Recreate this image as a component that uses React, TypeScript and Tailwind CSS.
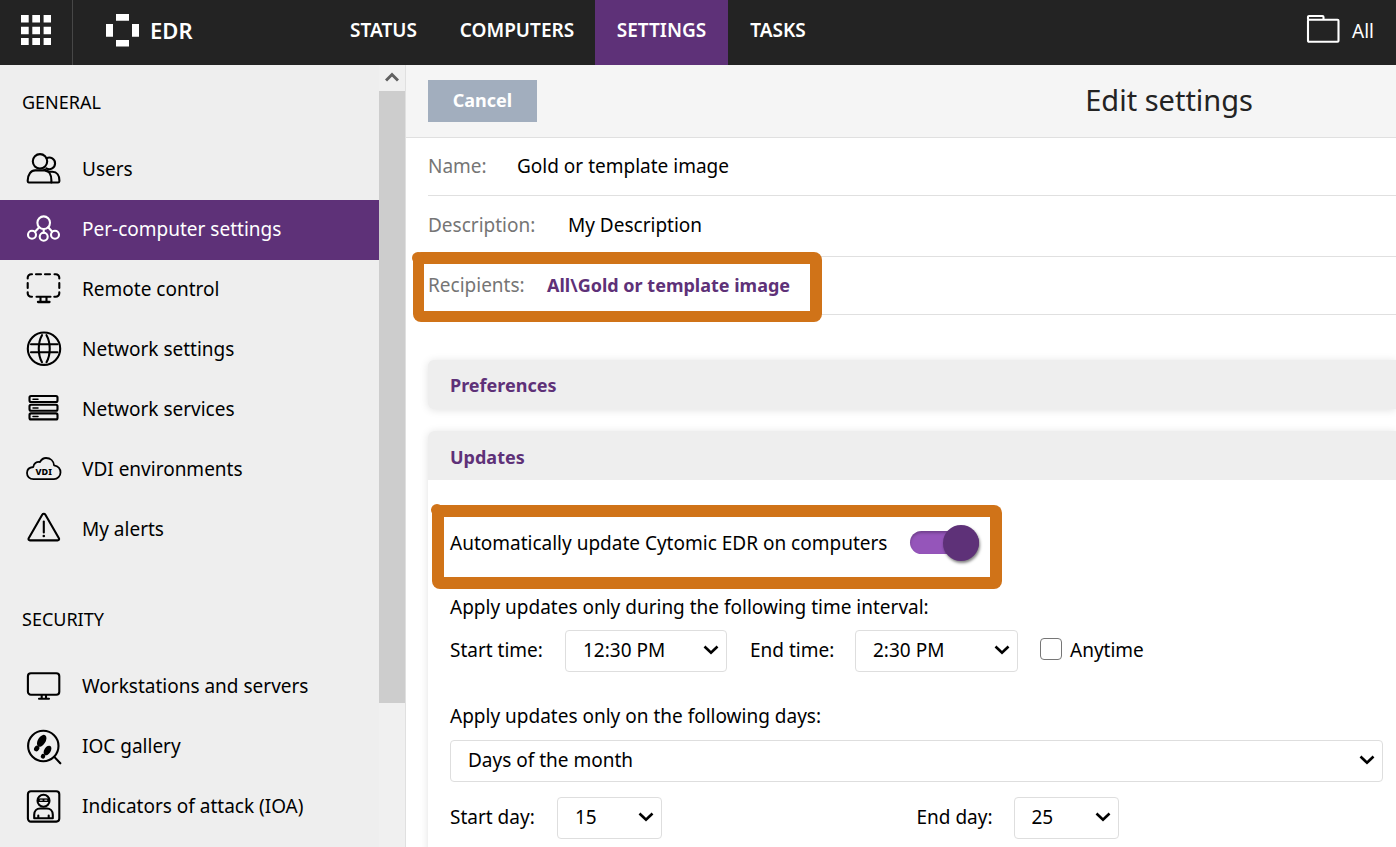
import React, { useState } from "react";

type IconProps = { children: React.ReactNode };

function Icon({ children }: IconProps) {
  return (
    <svg
      viewBox="0 0 36 40"
      className="h-10 w-9 shrink-0"
      fill="none"
      stroke="currentColor"
      strokeWidth="2.1"
      strokeLinecap="round"
      strokeLinejoin="round"
      aria-hidden="true"
    >
      {children}
    </svg>
  );
}

const UsersIcon = () => (
  <Icon>
    <circle cx="14" cy="11.3" r="7.2" />
    <path d="M20.6 8.2A5.8 5.8 0 1 1 20.4 18.4" />
    <path d="M3 32.5c-1 0-1.3-.6-1.3-2C1.9 24.5 5 20.4 9.2 20.4h9.3c4.5 0 6.9 4.4 6.9 10.1v2z" />
    <path d="M18.5 19.5q2 2.3 5.5 2.3h2.5c4.500 0 6.900 3.700 6.900 8.700 0 1.500-.3 2-1.400 2h-6.600" />
  </Icon>
);

const NodesIcon = () => (
  <Icon>
    <circle cx="17.7" cy="12.7" r="6.3" />
    <circle cx="6" cy="24.7" r="4" />
    <circle cx="17.7" cy="26.7" r="4" />
    <circle cx="29" cy="24.7" r="4" />
    <path d="M13.2 17.3 9 21.7M17.7 19v3.7M22.2 17.3l4 4.4" />
  </Icon>
);

const RemoteIcon = () => (
  <Icon>
    <path d="M1.7 8.5V7.8a3.5 3.5 0 0 1 3.5-3.5h.8M10 4.3h5M19 4.3h5M28.5 4.3h1.3a3.5 3.5 0 0 1 3.5 3.5v.7M33.3 13v5M33.3 22.3v.9a3.5 3.5 0 0 1-3.5 3.5h-1.5M24.5 26.7h-14M6 26.7h-.8a3.5 3.5 0 0 1-3.5-3.500v-.9M1.700 13v5" />
    <path d="M14.5 27v4.5M20.5 27v4.5" />
    <path d="M12 32h11.5" strokeWidth="2.3" />
  </Icon>
);

const GlobeIcon = () => (
  <Icon>
    <circle cx="18" cy="18.7" r="16.2" />
    <path d="M5 14.3h26.5M5 22.3h26.5M16 5.2c-4.3 7.5-4.3 19.5 0 27M20.5 5.2c4.3 7.5 4.3 19.5 0 27" />
  </Icon>
);

const ServicesIcon = () => (
  <Icon>
    <rect x="3.5" y="6" width="28" height="6" rx="1.5" />
    <rect x="3.5" y="14.7" width="28" height="6" rx="1.5" />
    <rect x="3.5" y="23.4" width="28" height="6" rx="1.5" />
    <path d="M7 9.2h5M7 17.9h5M7 26.6h5" strokeWidth="1.5" />
  </Icon>
);

const VdiIcon = () => (
  <Icon>
    <path
      strokeWidth="1.8"
      d="M7.5 29.2C3.5 29.2 1 26.5 1 23c0-3 2.2-5.6 6.300-6 .2-3.500 3.200-5.500 6.700-5C15.500 9.200 17.500 8 20 8c4.500 0 7.700 3 8 7.300 4 .7 6.500 3.700 6.500 7.200 0 3.500-3 6.700-6.500 6.700Z"
    />
    <text
      x="17.7"
      y="25"
      textAnchor="middle"
      fill="currentColor"
      stroke="none"
      fontSize="9"
      fontWeight="800"
    >
      VDI
    </text>
  </Icon>
);

const AlertIcon = () => (
  <Icon>
    <path d="M16.2 4.7a1.9 1.9 0 0 1 3.2 0l13.5 23.5c.6 1.200 0 2.200-1.300 2.200H4c-1.300 0-1.900-1-1.300-2.200Z" />
    <path d="M17.8 11.5v11" />
    <circle cx="17.8" cy="26" r="1.3" fill="currentColor" stroke="none" />
  </Icon>
);

const MonitorIcon = () => (
  <Icon>
    <rect x="1.9" y="6.3" width="31.4" height="21.4" rx="3" />
    <path d="M15.7 28v3.5M20 28v3.5M13 31.8h10" />
  </Icon>
);

const FootprintIcon = () => (
  <Icon>
    <circle cx="17.3" cy="19" r="15.2" />
    <path d="m28.3 29.900 6 6.400" />
    <g fill="currentColor" stroke="none">
      <ellipse cx="15.7" cy="13.8" rx="3.8" ry="6.6" transform="rotate(32 15.7 13.8)" />
      <ellipse cx="10.7" cy="21.5" rx="2.5" ry="3" transform="rotate(32 10.7 21.5)" />
      <ellipse cx="21.5" cy="23.5" rx="3.2" ry="5.3" transform="rotate(32 21.5 23.5)" />
      <ellipse cx="17" cy="29.3" rx="2.2" ry="2.4" transform="rotate(32 17 29.3)" />
    </g>
  </Icon>
);

const AttackerIcon = () => (
  <Icon>
    <rect x="1.9" y="4.2" width="31.4" height="30.4" rx="3" />
    <circle cx="17.5" cy="13.7" r="6" />
    <path d="M11.8 11.4h11.400v3.600H11.800z" fill="currentColor" stroke="none" />
    <path d="M14.2 13.2h2M18.800 13.200h2" stroke="#eee" strokeWidth="1" />
    <path d="M8.2 31.3v-3.500c0-4 2.500-6.300 6-6.300h6.600c3.500 0 6 2.300 6 6.300v3.500zM12.300 28.500v2.500M22.700 28.500v2.500" />
  </Icon>
);

type MenuItem = { label: string; icon: () => React.JSX.Element; active?: boolean };

const general: MenuItem[] = [
  { label: "Users", icon: UsersIcon },
  { label: "Per-computer settings", icon: NodesIcon, active: true },
  { label: "Remote control", icon: RemoteIcon },
  { label: "Network settings", icon: GlobeIcon },
  { label: "Network services", icon: ServicesIcon },
  { label: "VDI environments", icon: VdiIcon },
  { label: "My alerts", icon: AlertIcon },
];

const security: MenuItem[] = [
  { label: "Workstations and servers", icon: MonitorIcon },
  { label: "IOC gallery", icon: FootprintIcon },
  { label: "Indicators of attack (IOA)", icon: AttackerIcon },
];

function Menu({ items }: { items: MenuItem[] }) {
  return (
    <ul>
      {items.map(({ label, icon: Glyph, active }) => (
        <li key={label}>
          <a
            href="#"
            aria-current={active ? "page" : undefined}
            className={
              active
                ? "flex h-15 items-center gap-5 bg-[#5e3178] pl-[26px] text-white"
                : "flex h-15 items-center gap-5 pl-[26px] text-black"
            }
          >
            <Glyph />
            <span className="pb-[2px]">{label}</span>
          </a>
        </li>
      ))}
    </ul>
  );
}

function Select({ id, value, className }: { id: string; value: string; className: string }) {
  return (
    <div className={`relative flex ${className}`}>
      <select
        id={id}
        defaultValue={value}
        className="h-[42px] w-full appearance-none rounded border border-[#dedede] bg-white pr-8 pb-[2px] pl-[17px] text-black"
      >
        <option>{value}</option>
      </select>
      <svg
        viewBox="0 0 16 10"
        className="pointer-events-none absolute top-[15px] right-2 h-[10px] w-4"
        fill="none"
        stroke="#000"
        strokeWidth="2.6"
        aria-hidden="true"
      >
        <path d="m1.5 1.5 6.500 6.300 6.500-6.300" />
      </svg>
    </div>
  );
}

const tabs = [
  { label: "STATUS", width: "w-[111px]" },
  { label: "COMPUTERS", width: "w-[156px]" },
  { label: "SETTINGS", width: "w-[133px]", active: true },
  { label: "TASKS", width: "w-[100px]" },
];

export default function App() {
  const [auto, setAuto] = useState(true);

  return (
    <div className="flex h-screen flex-col overflow-hidden bg-white font-['Noto_Sans',sans-serif] text-[19px] leading-6 text-black">
      <header className="flex h-[65px] shrink-0 bg-[#232323] pb-[5px] text-white">
        <button aria-label="Applications" className="-mb-[5px] flex w-[73px] items-center justify-center border-r border-[#474747] pb-[5px]">
          <svg viewBox="0 0 30 30" className="h-[30px] w-[30px]" fill="#fff" aria-hidden="true">
            <path d="M0 0h7.7v7.500H0zM11.300 0H19v7.500h-7.700zM22.600 0h7.700v7.500h-7.700zM0 11.800h7.700v7.400H0zM11.300 11.800H19v7.400h-7.700zM22.600 11.800h7.700v7.400h-7.700zM0 23h7.700v7.500H0zM11.300 23H19v7.500h-7.700zM22.600 23h7.700v7.500h-7.700z" />
          </svg>
        </button>
        <a href="#" className="flex w-[255px] items-center gap-[11px] pl-[33px] text-[22px] font-semibold">
          <svg viewBox="0 0 33 33" className="h-[33px] w-[33px]" fill="#fff" aria-hidden="true">
            <path d="M10 0h13v6.800H10zM10 26h13v6.600H10zM0 10h7v12.800H0zM26 10h7v12.800h-7z" />
          </svg>
          EDR
        </a>
        <nav className="-mb-[5px] flex">
          {tabs.map((t) => (
            <a
              key={t.label}
              href="#"
              className={`flex items-center justify-center pb-[5px] font-semibold ${t.width} ${t.active ? "bg-[#5e3178]" : ""}`}
            >
              {t.label}
            </a>
          ))}
        </nav>
        <button className="ml-auto flex items-center gap-3 pt-[2px] pr-[22px]">
          <svg viewBox="0 0 34 30" className="mb-1 h-[30px] w-[34px]" fill="none" stroke="#fff" strokeWidth="2.1" strokeLinejoin="round" aria-hidden="true">
            <path d="M2 5.700V3a1 1 0 0 1 1-1h13.500a1 1 0 0 1 1 1v2.700" />
            <rect x="2" y="5.7" width="30.5" height="22" rx="1" />
          </svg>
          All
        </button>
      </header>

      <div className="flex min-h-0 flex-1">
        <aside className="flex w-[406px] shrink-0 border-r border-[#e0e0e0] bg-[#eee]">
          <nav className="flex-1 overflow-hidden">
            <h2 className="h-[75px] pt-[25px] pl-[22px] text-[18px]">GENERAL</h2>
            <Menu items={general} />
            <h2 className="h-[97px] pt-[47px] pl-[22px] text-[18px]">SECURITY</h2>
            <Menu items={security} />
          </nav>
          <div className="flex w-[26px] flex-col bg-[#f0f0f0]">
            <div className="flex h-[26px] shrink-0 items-center justify-center">
              <svg viewBox="0 0 14 12" className="h-3 w-[14px]" fill="none" stroke="#606060" strokeWidth="3" aria-hidden="true">
                <path d="m1 8.500 6-6 6 6" />
              </svg>
            </div>
            <div className="min-h-0 flex-1">
              <div className="h-[81%] bg-[#cdcdcd]" />
            </div>
          </div>
        </aside>

        <main className="min-w-0 flex-1 overflow-hidden">
          <div className="flex h-[73px] items-center justify-between border-b border-[#e0e0e0] bg-[#f5f5f5] pr-[143px] pl-[22px]">
            <button className="h-[42px] w-[109px] bg-[#a2aebe] pb-[2px] text-[18px] font-bold text-white">Cancel</button>
            <h1 className="pb-[2px] text-[29px] text-[#232323]">Edit settings</h1>
          </div>

          <div className="pl-[22px]">
            <dl>
              <div className="flex h-[58px] items-center border-b border-[#e0e0e0] pb-[2px]">
                <dt className="w-[89px] text-[#757575]">Name:</dt>
                <dd>Gold or template image</dd>
              </div>
              <div className="flex h-[61px] items-center border-b border-[#e0e0e0] pb-[2px]">
                <dt className="w-[140px] text-[#757575]">Description:</dt>
                <dd>My Description</dd>
              </div>
              <div className="relative flex h-[58px] items-center border-b border-[#e0e0e0] pb-[2px]">
                <dt className="w-[119px] text-[#757575]">Recipients:</dt>
                <dd>
                  <a href="#" className="text-[18px] font-bold text-[#5e3178]">
                    All\Gold or template image
                  </a>
                </dd>
                <div className="pointer-events-none absolute -top-[5px] -left-[15px] h-[70px] w-[409px] rounded-lg bg-[#d07318] [clip-path:polygon(evenodd,0_0,100%_0,100%_100%,0_100%,0_0,11px_12px,397px_12px,397px_59px,11px_59px,11px_12px)]" />
                <div className="pointer-events-none absolute -top-[5px] -left-4 h-3 w-3 rounded-full bg-[#d07318]" />
              </div>
            </dl>

            <section className="mt-[45px] flex h-[49px] items-center rounded-l-md bg-[#eee] pl-[22px] shadow-[0_1px_8px_rgba(0,0,0,0.12)]">
              <h2 className="text-[18px] font-bold text-[#5e3178]">Preferences</h2>
            </section>

            <section className="mt-[22px] h-[500px] rounded-l-md shadow-[0_1px_8px_rgba(0,0,0,0.12)]">
              <div className="flex h-[49px] items-center rounded-tl-md bg-[#eee] pt-[2px] pl-[22px]">
                <h2 className="text-[18px] font-bold text-[#5e3178]">Updates</h2>
              </div>

              <div className="pt-[37px] pr-[13px] pl-[22px]">
                <div className="relative flex h-[60px] w-[529px] items-start justify-between">
                  <label htmlFor="auto" className="pt-[14px]">
                    Automatically update Cytomic EDR on computers
                  </label>
                  <button
                    id="auto"
                    role="switch"
                    aria-checked={auto}
                    onClick={() => setAuto(!auto)}
                    className={`mt-[14px] flex h-[23px] w-[69px] items-center rounded-full bg-[#9555ba] shadow-[inset_0_2px_3px_rgba(0,0,0,0.25)] ${auto ? "justify-end" : "justify-start"}`}
                  >
                    <span className="h-9 w-9 shrink-0 rounded-full bg-[#5e3178] shadow-[1px_2px_3px_rgba(0,0,0,0.5)]" />
                  </button>
                  <div className="pointer-events-none absolute -top-3 -left-[18px] h-[84px] w-[570px] rounded-lg bg-[#d07318] [clip-path:polygon(evenodd,0_0,100%_0,100%_100%,0_100%,0_0,12px_12px,558px_12px,558px_72px,12px_72px,12px_12px)]" />
                  <div className="pointer-events-none absolute -top-[13px] -left-[19px] h-3 w-3 rounded-full bg-[#d07318]" />
                </div>

                <p className="mt-[18px]">Apply updates only during the following time interval:</p>
                <div className="mt-[11px] flex items-center">
                  <label htmlFor="start-time" className="w-[115px] pb-[2px]">Start time:</label>
                  <Select id="start-time" value="12:30 PM" className="w-[162px]" />
                  <label htmlFor="end-time" className="ml-[23px] w-[105px] pb-[2px]">End time:</label>
                  <Select id="end-time" value="2:30 PM" className="w-[163px]" />
                  <input
                    id="anytime"
                    type="checkbox"
                    className="mr-2 mb-1 ml-[22px] h-[22px] w-[22px] appearance-none rounded border border-[#767676] bg-white checked:bg-[#5e3178]"
                  />
                  <label htmlFor="anytime" className="pb-[2px]">Anytime</label>
                </div>

                <label htmlFor="days" className="mt-8 block">Apply updates only on the following days:</label>
                <Select id="days" value="Days of the month" className="mt-3 w-full" />

                <div className="mt-[15px] flex">
                  <div className="flex flex-1 items-center">
                    <label htmlFor="start-day" className="w-[107px] pb-[2px]">Start day:</label>
                    <Select id="start-day" value="15" className="w-[105px]" />
                  </div>
                  <div className="flex flex-1 items-center">
                    <label htmlFor="end-day" className="w-[97px] pb-[2px]">End day:</label>
                    <Select id="end-day" value="25" className="w-[105px]" />
                  </div>
                </div>
              </div>
            </section>
          </div>
        </main>
      </div>
    </div>
  );
}
